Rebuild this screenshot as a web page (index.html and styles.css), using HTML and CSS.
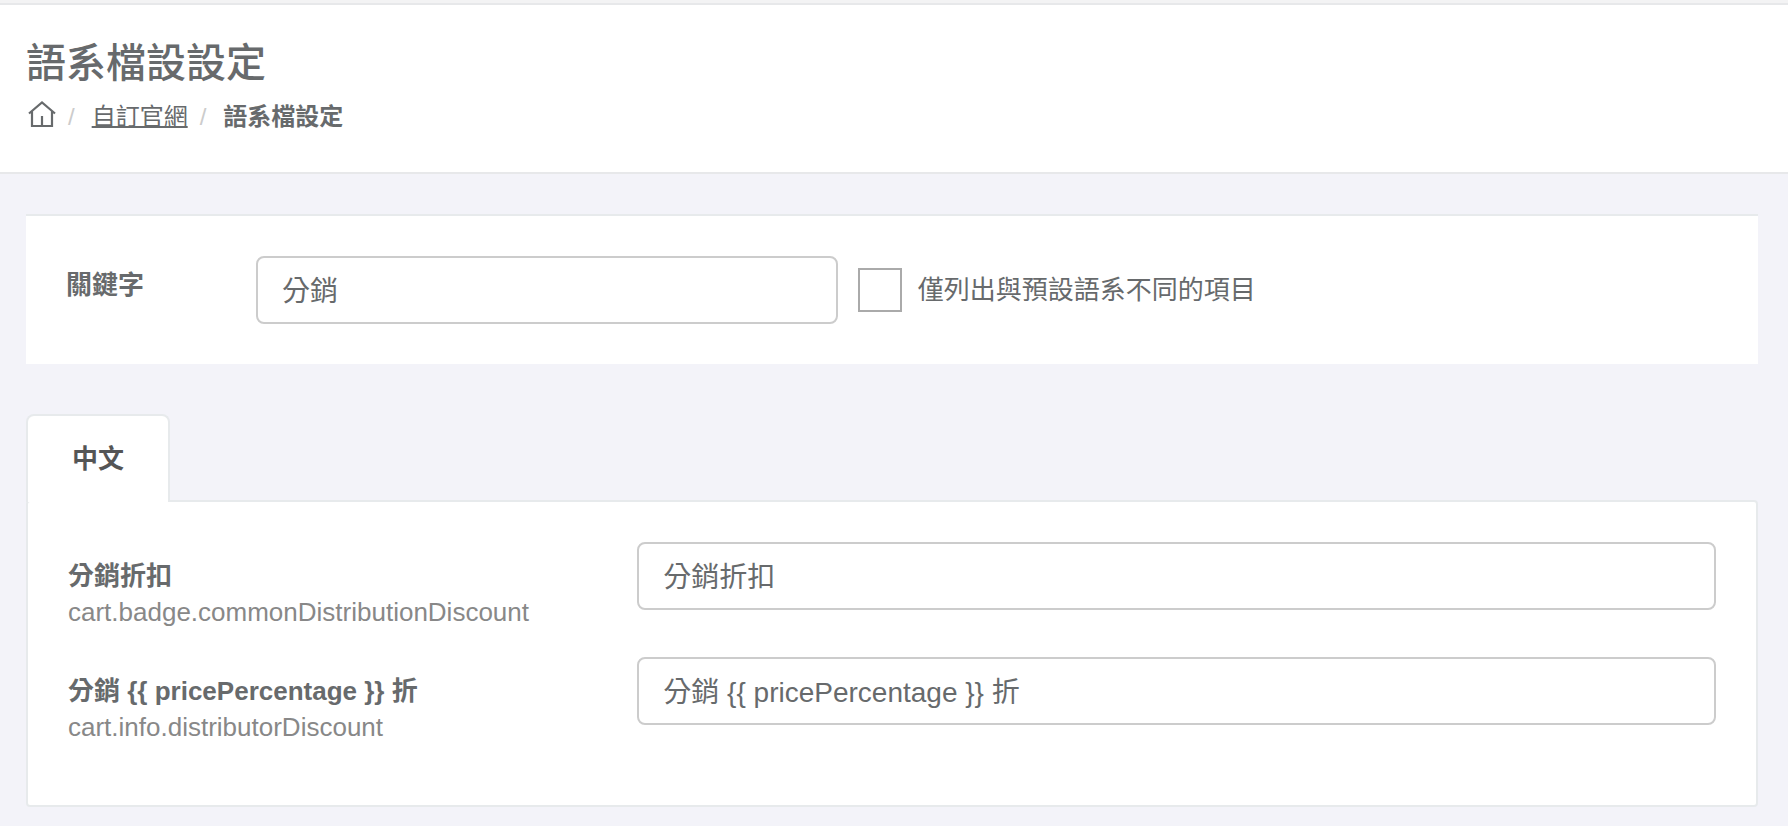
FILE: index.html
```html
<!DOCTYPE html>
<html lang="zh-Hant">
<head>
<meta charset="utf-8">
<meta name="viewport" content="width=device-width, initial-scale=1">
<title>語系檔設設定</title>
<link rel="stylesheet" href="styles.css">
</head>
<body>
<header class="page-heading">
  <h1 class="page-title">語系檔設設定</h1>
  <nav>
    <ol class="breadcrumb">
      <li><a class="home-link" href="#" aria-label="Home"><svg class="home-icon" viewBox="0 0 28 26" fill="none" stroke="currentColor" stroke-width="2.200" aria-hidden="true"><path d="M1 12.500 14 1.500 27 12.500M4 10.500V25H24V10.500M14 24V15"/></svg></a></li>
      <li><a class="crumb-link" href="#">自訂官網</a></li>
      <li><strong>語系檔設定</strong></li>
    </ol>
  </nav>
</header>
<main class="content">
  <form class="filter-card">
    <label class="field-label filter-label" for="keyword">關鍵字</label>
    <input class="text-field" id="keyword" type="text" value="分銷">
    <label class="check-label"><input class="check-box" type="checkbox">僅列出與預設語系不同的項目</label>
  </form>
  <section class="tabs">
    <div class="tab-list" role="tablist">
      <button class="tab" type="button" role="tab" aria-selected="true" aria-controls="panel-zh" id="tab-zh">中文</button>
    </div>
    <form class="tab-panel" role="tabpanel" id="panel-zh" aria-labelledby="tab-zh">
      <div class="entry">
        <label class="entry-label" for="discount"><span class="field-label">分銷折扣</span><span class="entry-key">cart.badge.commonDistributionDiscount</span></label>
        <input class="text-field entry-field" id="discount" type="text" value="分銷折扣">
      </div>
      <div class="entry">
        <label class="entry-label" for="distributor"><span class="field-label">分銷 {{ pricePercentage }} 折</span><span class="entry-key">cart.info.distributorDiscount</span></label>
        <input class="text-field entry-field" id="distributor" type="text" value="分銷 {{ pricePercentage }} 折">
      </div>
    </form>
  </section>
</main>
</body>
</html>
```
FILE: styles.css
```css
* { box-sizing: border-box; }

body {
  margin: 0;
  background: #f3f3f9;
  color: #676a6c;
  font-family: "Liberation Sans", "Noto Sans CJK TC", sans-serif;
  font-size: 26px;
  line-height: 36px;
}

.page-heading {
  padding: 32px 26px 35px;
  border-top: 2px solid #e7e8ea;
  border-bottom: 2px solid #e7e8ea;
  background: #fff;
}

body::before {
  content: "";
  display: block;
  height: 3px;
  background: #f3f3f4;
}

.page-title {
  margin: 0 0 8px;
  font-size: 40px;
  font-weight: 500;
  line-height: 52px;
}

.breadcrumb {
  display: flex;
  align-items: center;
  margin: 0;
  padding: 0;
  list-style: none;
  font-size: 24px;
  line-height: 40px;
}

.breadcrumb li { display: flex; align-items: center; }

.breadcrumb li + li::before {
  content: "/";
  padding: 0 17px 0 12px;
  color: #ccc;
}

.home-link { display: flex; margin: 0 0 6px 2px; color: inherit; }
.home-icon { width: 28px; height: 26px; }

.crumb-link {
  color: inherit;
  text-decoration: underline;
  text-decoration-thickness: 2px;
}

.content { padding: 40px 30px 20px 26px; }

.filter-card {
  display: grid;
  grid-template-columns: 170px 23fr 34fr;
  column-gap: 20px;
  align-items: center;
  padding: 40px;
  border-top: 2px solid #e7eaec;
  background: #fff;
}

.field-label { font-weight: 700; }
.filter-label { align-self: start; padding-top: 11px; }

.text-field {
  width: 100%;
  min-width: 0;
  height: 68px;
  padding: 0 24px 2px;
  border: 2px solid #ccc;
  border-radius: 8px;
  background: #fff;
  color: inherit;
  font: inherit;
  font-size: 28px;
}

.check-label { display: flex; align-items: center; gap: 16px; }

.check-box {
  flex: none;
  width: 44px;
  height: 44px;
  margin: 0;
  appearance: none;
  border: 2px solid #aaa;
  background: #fff;
}

.check-box:checked { background: #676a6c; }

.tabs { margin-top: 50px; }

.tab-list { display: flex; }

.tab {
  z-index: 1;
  height: 88px;
  margin-bottom: -2px;
  padding: 0 44px;
  border: 2px solid #e7eaec;
  border-bottom: 0;
  border-radius: 8px 8px 0 0;
  background: #fff;
  color: #555;
  font: inherit;
  font-weight: 700;
}

.tab-panel {
  display: grid;
  gap: 27px;
  padding: 40px 40px 60px;
  border: 2px solid #e7eaec;
  border-radius: 4px;
  background: #fff;
}

.entry {
  display: grid;
  grid-template-columns: repeat(12, minmax(0, 1fr));
  column-gap: 60px;
}

.entry-label {
  display: flex;
  flex-direction: column;
  grid-column: span 4;
  padding-top: 16px;
  white-space: nowrap;
}

.entry-key { color: #888; }
.entry-field { grid-column: span 8; }
```
